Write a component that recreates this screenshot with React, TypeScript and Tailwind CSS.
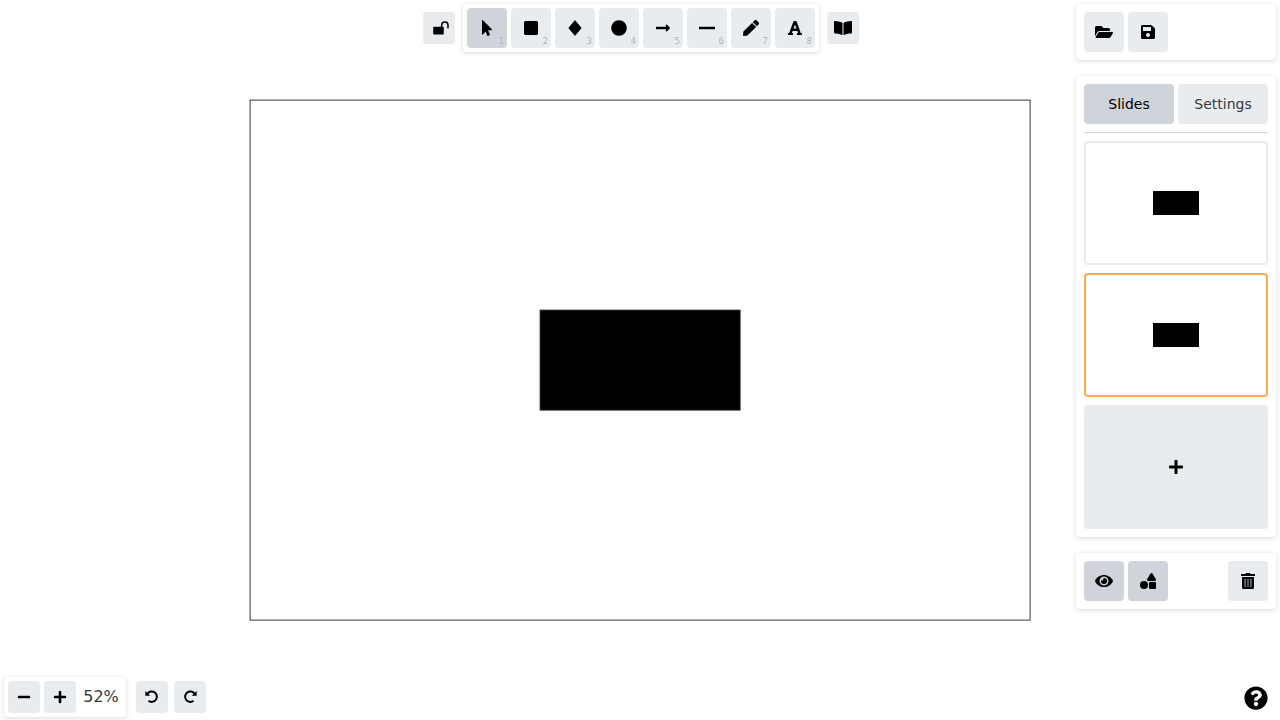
import type { ReactNode } from "react";
import clsx from "clsx";
import {
  FaBookOpen,
  FaCircle,
  FaEye,
  FaFolderOpen,
  FaFont,
  FaLongArrowAltRight,
  FaMinus,
  FaMousePointer,
  FaPen,
  FaPlus,
  FaQuestionCircle,
  FaSave,
  FaShapes,
  FaSquare,
} from "react-icons/fa";

const OpenLock = () => (
  <svg viewBox="0 0 16 14" className="ml-1 h-3.5 w-4" aria-hidden="true">
    <rect x="0.2" y="5.700" width="10.6" height="7.800" rx="1" />
    <path d="M8.700 6.500 V4.200 a3.150 3.150 0 0 1 6.300 0 V6.700" fill="none" stroke="#000" strokeWidth="1.500" strokeLinecap="round" />
  </svg>
);

const Diamond = () => (
  <svg viewBox="0 0 16 16" className="size-4" aria-hidden="true">
    <path d="M8 0.6 L14.2 8 L8 15.4 L1.800 8 Z" stroke="#000" strokeWidth="0.8" strokeLinejoin="round" />
  </svg>
);

const Line = () => (
  <svg viewBox="0 0 16 16" className="size-4" aria-hidden="true">
    <path d="M0 8 H16" stroke="#000" strokeWidth="2.500" />
  </svg>
);

const Trash = () => (
  <svg viewBox="0 0 448 512" className="size-4" aria-hidden="true">
    <path d="M32 464a48 48 0 0 0 48 48h288a48 48 0 0 0 48-48V128H32z" />
    <path d="M132 192v256M224 192v256M316 192v256" stroke="#858585" strokeWidth="44" />
    <path d="M432 32H312l-9.4-18.7A24 24 0 0 0 281.1 0H166.8a23.7 23.7 0 0 0-21.4 13.300L136 32H16A16 16 0 0 0 0 48v32a16 16 0 0 0 16 16h416a16 16 0 0 0 16-16V48a16 16 0 0 0-16-16z" />
  </svg>
);

const Turn = ({ redo = false }: { redo?: boolean }) => (
  <svg viewBox="0 0 16 16" className={clsx("size-4", redo && "-scale-x-100")} aria-hidden="true">
    <path d="M3.300 4.900 A5.200 5.200 0 1 1 4.500 11.800" fill="none" stroke="#000" strokeWidth="2" />
    <path d="M1.300 2 V6.800 H6.300 Z" />
  </svg>
);

const tools: { name: string; icon: ReactNode }[] = [
  { name: "Selection", icon: <FaMousePointer /> },
  { name: "Rectangle", icon: <FaSquare /> },
  { name: "Diamond", icon: <Diamond /> },
  { name: "Ellipse", icon: <FaCircle /> },
  { name: "Arrow", icon: <FaLongArrowAltRight /> },
  { name: "Line", icon: <Line /> },
  { name: "Draw", icon: <FaPen /> },
  { name: "Text", icon: <FaFont /> },
];

function IconButton({
  label,
  children,
  active = false,
  small = false,
}: {
  label: string;
  children: ReactNode;
  active?: boolean;
  small?: boolean;
}) {
  return (
    <button
      type="button"
      aria-label={label}
      className={clsx(
        "relative flex shrink-0 items-center justify-center rounded text-black",
        small ? "size-8" : "size-10",
        active ? "bg-[#ced4da]" : "bg-[#e9ecef]",
      )}
    >
      {children}
    </button>
  );
}

function Island({ className, children }: { className: string; children: ReactNode }) {
  return (
    <div className={clsx("rounded bg-white shadow-[0_1px_5px_rgba(0,0,0,0.15)]", className)}>{children}</div>
  );
}

function Slide({ number, selected = false }: { number: number; selected?: boolean }) {
  return (
    <button
      type="button"
      aria-label={`Slide ${number}`}
      className={clsx(
        "flex h-31 w-full items-center justify-center rounded border-2 bg-white",
        selected ? "border-[#ffa94d]" : "border-[#e9ecef]",
      )}
    >
      <span className="h-6 w-[46px] bg-black" />
    </button>
  );
}

export default function App() {
  return (
    <div className="relative flex h-screen items-center justify-center overflow-hidden bg-white font-['DejaVu_Sans',sans-serif] text-[#495057]">
      <svg viewBox="0 0 782 522" className="w-[782px] shrink-0" role="img" aria-label="Current slide">
        <rect x="1.1" y="1.1" width="780" height="520" fill="#fff" stroke="#222" strokeWidth="0.9" />
        <rect x="291.1" y="211.1" width="200" height="100" fill="#000" stroke="#222" strokeWidth="0.9" />
      </svg>

      <header className="absolute inset-x-0 top-1 flex items-center justify-center gap-2 pl-0.5">
        <IconButton label="Keep selected tool active" small>
          <OpenLock />
        </IconButton>
        <Island className="flex gap-1 p-1">
          {tools.map(({ name, icon }, index) => (
            <IconButton key={name} label={name} active={index === 0}>
              {icon}
              <span className="absolute right-[3px] bottom-0.5 font-['DejaVu_Sans_Mono',monospace] text-[9px] leading-none text-[#adb5bd]">
                {index + 1}
              </span>
            </IconButton>
          ))}
        </Island>
        <IconButton label="Library" small>
          <FaBookOpen className="text-lg" />
        </IconButton>
      </header>

      <aside className="absolute top-1 right-1 flex w-50 flex-col gap-4">
        <Island className="flex gap-1 p-2">
          <IconButton label="Open">
            <FaFolderOpen className="text-lg" />
          </IconButton>
          <IconButton label="Save">
            <FaSave />
          </IconButton>
        </Island>
        <Island className="flex flex-col gap-2 p-2">
          <div className="flex gap-1 text-sm">
            <button type="button" className="h-10 flex-1 rounded bg-[#ced4da] text-black">
              Slides
            </button>
            <button type="button" className="h-10 flex-1 rounded bg-[#e9ecef] text-[#343a40]">
              Settings
            </button>
          </div>
          <hr className="border-[#ced4da]" />
          <Slide number={1} />
          <Slide number={2} selected />
          <button
            type="button"
            aria-label="Add slide"
            className="flex h-31 items-center justify-center rounded bg-[#e9ecef] text-black"
          >
            <FaPlus />
          </button>
        </Island>
        <Island className="flex gap-1 p-2">
          <IconButton label="Preview" active>
            <FaEye className="text-lg" />
          </IconButton>
          <IconButton label="Shapes" active>
            <FaShapes />
          </IconButton>
          <div className="ml-auto">
            <IconButton label="Delete">
              <Trash />
            </IconButton>
          </div>
        </Island>
      </aside>

      <footer className="absolute bottom-[3px] left-1 flex items-center">
        <Island className="flex items-center gap-1 p-1">
          <IconButton label="Zoom out" small>
            <FaMinus className="text-sm" />
          </IconButton>
          <IconButton label="Zoom in" small>
            <FaPlus className="text-sm" />
          </IconButton>
          <span className="w-[42px] text-center text-base text-[#343a40]">52%</span>
        </Island>
        <div className="ml-2.5 flex gap-1.5">
          <IconButton label="Undo" small>
            <Turn />
          </IconButton>
          <IconButton label="Redo" small>
            <Turn redo />
          </IconButton>
        </div>
      </footer>

      <button type="button" aria-label="Help" className="absolute right-3 bottom-2.5 text-2xl text-black">
        <FaQuestionCircle />
      </button>
    </div>
  );
}
